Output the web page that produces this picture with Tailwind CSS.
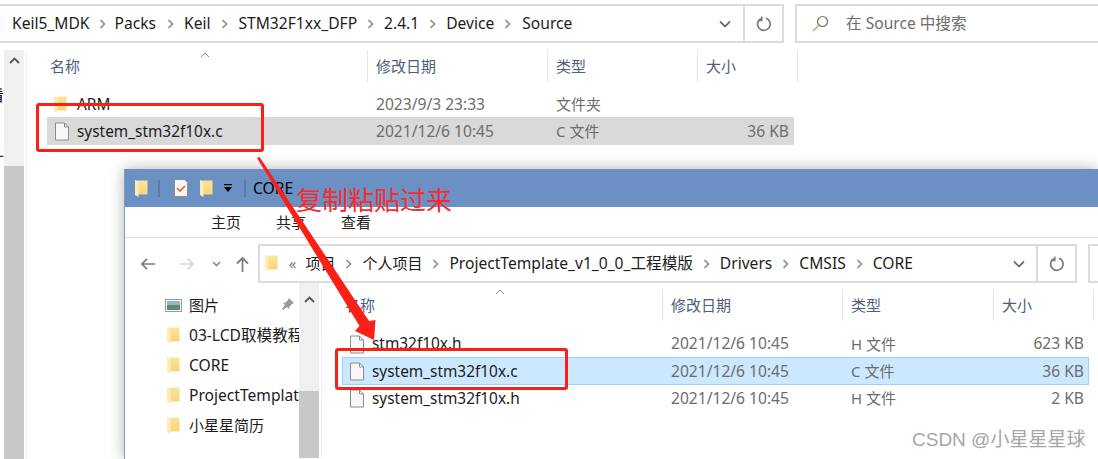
<!DOCTYPE html>
<html lang="zh-CN">
<head>
	<meta charset="UTF-8">
	<title>Source</title>
	<script src="https://cdn.jsdelivr.net/npm/@tailwindcss/browser@4"></script>
</head>
<body class="m-0 bg-white">
<svg class="absolute w-0 h-0">
	<defs>
		<linearGradient id="fold" x1="0" y1="0" x2="0" y2="1">
			<stop offset="0" stop-color="#fbe39a"/>
			<stop offset="1" stop-color="#f8d672"/>
		</linearGradient>
	</defs>
	<symbol id="folder" viewBox="0 0 13 17"><path d="M3 0.500h9.500v14H3z" fill="url(#fold)"/><path d="M0 0l3.500 1v16L0 15z" fill="#fdecb8"/></symbol>
	<symbol id="file" viewBox="0 0 16 19"><path d="M1.500 1h9l4 4v13h-13z" fill="#f8f8f8" stroke="#8c8c8c"/><path d="M10.500 1v4h4" fill="none" stroke="#8c8c8c"/></symbol>
	<symbol id="chev" viewBox="0 0 7 10"><path d="M1.500 1l4 4-4 4" fill="none" stroke="#8a8a8a" stroke-width="1.600"/></symbol>
	<symbol id="refresh" viewBox="0 0 16 16"><path d="M10 2.200a6.300 6.300 0 1 1-4.500.100" fill="none" stroke="#7d7d7d" stroke-width="1.800"/><path d="M5.800 0.500v4h-4" fill="none" stroke="#7d7d7d" stroke-width="1.500"/></symbol>
</svg>

<div class="relative w-[1098px] h-[459px] overflow-hidden bg-white text-[#1c1c1c] font-['Noto_Sans','Noto_Sans_CJK_SC',sans-serif] text-[15px] leading-none">

	<!-- back window: address bar -->
	<div class="pt-1 flex h-[43px]">
		<div class="w-[784px] h-[39px] border-y-2 border-r-2 border-[#dcdcdc] flex items-center text-[15.6px]">
			<div class="flex-1 flex items-center pl-3">
				<span>Keil5_MDK</span>
				<svg class="w-[7px] h-[10px] ml-[9px] mr-[9px]"><use href="#chev"/></svg>
				<span>Packs</span>
				<svg class="w-[7px] h-[10px] ml-[11px] mr-[10px]"><use href="#chev"/></svg>
				<span>Keil</span>
				<svg class="w-[7px] h-[10px] ml-[10px] mr-[11px]"><use href="#chev"/></svg>
				<span>STM32F1xx_DFP</span>
				<svg class="w-[7px] h-[10px] ml-[10px] mr-[10px]"><use href="#chev"/></svg>
				<span>2.4.1</span>
				<svg class="w-[7px] h-[10px] ml-[10px] mr-[10px]"><use href="#chev"/></svg>
				<span>Device</span>
				<svg class="w-[7px] h-[10px] ml-[10px] mr-[11px]"><use href="#chev"/></svg>
				<span>Source</span>
			</div>
			<svg class="w-[12px] h-[8px] mr-[12px]" viewBox="0 0 12 8" fill="none" stroke="#707070" stroke-width="1.800"><path d="M1 1.500l5 5 5-5"/></svg>
			<div class="w-[39px] h-full border-l-2 border-[#dcdcdc] flex items-center justify-center">
				<svg class="w-[16px] h-[16px]"><use href="#refresh"/></svg>
			</div>
		</div>
		<div class="ml-[11px] flex-1 h-[39px] border-y-2 border-l-2 border-[#dcdcdc] flex items-center text-[#6d6d6d] text-[15.6px]">
			<svg class="w-[17px] h-[17px] ml-[15px] mr-[17px]" viewBox="0 0 17 17" fill="none" stroke-width="1.200"><circle cx="10.500" cy="6.500" r="5" stroke="#707070"/><path d="M7 10L1 16" stroke="#c99a60"/></svg>
			<span>在 Source 中搜索</span>
		</div>
	</div>

	<!-- back window: body -->
	<div class="flex h-[416px] pt-[7px]">
		<div class="w-1 relative overflow-hidden text-black">
			<span class="absolute right-0 top-[38px]">看</span>
			<span class="absolute right-0 top-[100px] text-[#7a1a00]">计</span>
		</div>
		<div class="w-[20px] bg-[#f0f0f0] flex flex-col">
			<div class="h-[116px] flex justify-center pt-[7px]">
				<svg class="w-[11px] h-[7px]" viewBox="0 0 11 7" fill="none" stroke="#555" stroke-width="1.800"><path d="M1 6l4.500-4.500L10 6"/></svg>
			</div>
			<div class="flex-1 bg-[#c8c8c8]"></div>
		</div>
		<div class="w-[2px]"></div>
		<div class="border-l border-[#f0f0f0] pl-[20px] w-[768px]">
			<div class="relative grid grid-cols-[321px_180px_150px_100px] w-[751px] h-8 items-center text-[#4c607a]">
				<div class="h-full border-r border-[#e5e5e5] flex items-center pl-[3px]">名称</div>
				<div class="h-full border-r border-[#e5e5e5] flex items-center pl-2">修改日期</div>
				<div class="h-full border-r border-[#e5e5e5] flex items-center pl-2">类型</div>
				<div class="h-full border-r border-[#e5e5e5] flex items-center pl-2">大小</div>
				<svg class="absolute left-[153px] top-[2px] w-[10px] h-[6px]" viewBox="0 0 10 6" fill="none" stroke="#888" stroke-width="1"><path d="M1 5l4-4 4 4"/></svg>
			</div>
			<div class="mt-2 w-[747px]">
				<div class="grid grid-cols-[321px_180px_150px_96px] h-[27px] pt-[2px] items-center text-[#6d6d6d]">
					<div class="flex items-center pl-[7px] text-[#1c1c1c] text-[15.4px]">
						<svg class="w-[13px] h-[17px] mr-[10px]"><use href="#folder"/></svg>
						<span class="ml-0">ARM</span>
					</div>
					<div class="pl-2 text-[15.6px]">2023/9/3 23:33</div>
					<div class="pl-2">文件夹</div>
					<div></div>
				</div>
				<div class="grid grid-cols-[321px_180px_150px_96px] h-[28px] pt-px items-center text-[#6d6d6d] bg-[#d9d9d9]">
					<div class="flex items-center pl-[7px] text-[#1c1c1c] text-[15.4px]">
						<svg class="w-[16px] h-[19px] mr-[7px]"><use href="#file"/></svg>
						<span>system_stm32f10x.c</span>
					</div>
					<div class="pl-2 text-[15.6px]">2021/12/6 10:45</div>
					<div class="pl-2">C 文件</div>
					<div class="text-right pr-[5px] text-[15.6px]">36 KB</div>
				</div>
			</div>
		</div>
	</div>

	<!-- front window -->
	<div class="absolute left-[124px] top-[169px] w-[974px] h-[290px] bg-white border-l border-[#7f9cc6] shadow-[0_0_14px_rgba(0,0,0,0.3)]">
		<div class="h-[38px] bg-[#6a90c4] flex items-center pl-[10px]">
			<svg class="w-[13px] h-[17px]"><use href="#folder"/></svg>
			<div class="w-[2px] h-[17px] ml-[10px] bg-[#a9bfdc] border-x border-[#5a7aa8]"></div>
			<svg class="w-[14px] h-[18px] ml-[14px]" viewBox="0 0 14 18"><path d="M0.500 0.500h10l3 3v14h-13z" fill="#f6f6f6" stroke="#8c8c8c"/><path d="M3 9l3 3 5-5" fill="none" stroke="#e8622a" stroke-width="1.600"/></svg>
			<svg class="w-[13px] h-[17px] ml-[12px]"><use href="#folder"/></svg>
			<svg class="w-[8px] h-[8px] ml-[11px]" viewBox="0 0 8 8"><rect y="0" width="8" height="1.200" fill="#000"/><path d="M0 3h8L4 8z" fill="#000"/></svg>
			<div class="w-[2px] h-[17px] ml-[12px] bg-[#a9bfdc] border-x border-[#5a7aa8]"></div>
			<span class="ml-[7px] pt-px text-black text-[15.6px]">CORE</span>
		</div>
		<div class="h-[31px] border-b border-[#dcdcdc] flex items-center pl-[86px] gap-[35px] text-[#222]">
			<span>主页</span><span>共享</span><span>查看</span>
		</div>
		<div class="h-[45px] pt-[6px] flex">
			<div class="w-[133px] h-[39px] flex items-center pl-[15px]">
				<svg class="w-[16px] h-[14px]" viewBox="0 0 17 14" fill="none" stroke="#7d7d7d" stroke-width="1.800"><path d="M16 7H2M7.500 1.500L2 7l5.500 5.500"/></svg>
				<svg class="w-[16px] h-[14px] ml-[23px]" viewBox="0 0 17 14" fill="none" stroke="#d8d8d8" stroke-width="1.800"><path d="M1 7h14M9.500 1.500L15 7l-5.500 5.500"/></svg>
				<svg class="w-[9px] h-[6px] ml-[17px]" viewBox="0 0 9 6" fill="none" stroke="#8a8a8a" stroke-width="1.600"><path d="M1 1l3.500 3.500L8 1"/></svg>
				<svg class="w-[13px] h-[16px] ml-[15px]" viewBox="0 0 13 16" fill="none" stroke="#7d7d7d" stroke-width="1.800"><path d="M6.500 16V2M1 7.500L6.500 2 12 7.500"/></svg>
			</div>
			<div class="w-[821px] h-[39px] border-2 border-[#dcdcdc] flex items-center">
				<div class="flex-1 flex items-center pl-[5px]">
					<svg class="w-[13px] h-[17px]"><use href="#folder"/></svg>
					<span class="ml-[11px] text-[#777]">«</span>
					<span class="ml-[9px]">项目</span>
					<svg class="w-[7px] h-[10px] ml-[10px] mr-[10px]"><use href="#chev"/></svg>
					<span>个人项目</span>
					<svg class="w-[7px] h-[10px] ml-[10px] mr-[10px]"><use href="#chev"/></svg>
					<span class="text-[15.6px]">ProjectTemplate_v1_0_0_工程模版</span>
					<svg class="w-[7px] h-[10px] ml-[10px] mr-[10px]"><use href="#chev"/></svg>
					<span class="text-[15.6px]">Drivers</span>
					<svg class="w-[7px] h-[10px] ml-[10px] mr-[10px]"><use href="#chev"/></svg>
					<span class="text-[15.6px]">CMSIS</span>
					<svg class="w-[7px] h-[10px] ml-[10px] mr-[10px]"><use href="#chev"/></svg>
					<span class="text-[15.6px]">CORE</span>
				</div>
				<svg class="w-[12px] h-[8px] mr-[11px]" viewBox="0 0 12 8" fill="none" stroke="#707070" stroke-width="1.800"><path d="M1 1.500l5 5 5-5"/></svg>
				<div class="w-[39px] h-full border-l-2 border-[#dcdcdc] flex items-center justify-center">
					<svg class="w-[16px] h-[16px]"><use href="#refresh"/></svg>
				</div>
			</div>
			<div class="ml-[11px] w-[10px] h-[39px] border-y-2 border-l-2 border-[#dcdcdc]"></div>
		</div>
		<div class="flex h-[175px] pt-[7px]">
			<div class="w-[174px] overflow-hidden whitespace-nowrap">
				<div class="h-[30px] flex items-center pl-[40px] relative">
					<svg class="w-[17px] h-[13px] mr-[7px]" viewBox="0 0 17 13"><rect x="0.500" y="0.500" width="16" height="12" fill="#fff" stroke="#9a9a9a"/><rect x="2" y="2" width="13" height="4" fill="#8fb8d8"/><rect x="2" y="6" width="13" height="5" fill="#5f8a70"/></svg>
					<span>图片</span>
					<svg class="absolute left-[156px] top-[8px] w-[13px] h-[13px]" viewBox="0 0 13 13" fill="#9a9a9a"><path d="M8 0l5 5-2 1-2.500 2.500-.5 2.500-2-2L2 12 1 11l3-4-2-2 2.500-.5L7 2z"/></svg>
				</div>
				<div class="h-[30px] flex items-center pl-[42px]">
					<svg class="w-[13px] h-[17px] mr-[9px] shrink-0"><use href="#folder"/></svg>
					<span class="text-[15.6px] pt-px">03-LCD取模教程</span>
				</div>
				<div class="h-[30px] flex items-center pl-[42px]">
					<svg class="w-[13px] h-[17px] mr-[9px] shrink-0"><use href="#folder"/></svg>
					<span class="text-[15.6px] pt-px">CORE</span>
				</div>
				<div class="h-[30px] flex items-center pl-[42px]">
					<svg class="w-[13px] h-[17px] mr-[9px] shrink-0"><use href="#folder"/></svg>
					<span class="text-[15.6px] pt-px">ProjectTemplate</span>
				</div>
				<div class="h-[30px] flex items-center pl-[42px]">
					<svg class="w-[13px] h-[17px] mr-[9px] shrink-0"><use href="#folder"/></svg>
					<span>小星星简历</span>
				</div>
			</div>
			<div class="w-[20px] -mt-[7px] bg-[#f0f0f0] flex flex-col">
				<div class="h-[108px] flex justify-center pt-[13px]">
					<svg class="w-[11px] h-[7px]" viewBox="0 0 11 7" fill="none" stroke="#555" stroke-width="1.800"><path d="M1 6l4.500-4.500L10 6"/></svg>
				</div>
				<div class="flex-1 bg-[#c8c8c8]"></div>
			</div>
			<div class="w-[2px]"></div>
			<div class="border-l border-[#f0f0f0] pl-[20px] -mt-[1px]">
				<div class="relative grid grid-cols-[321px_180px_151px_100px] h-8 items-center text-[#4c607a]">
					<div class="h-full border-r border-[#e5e5e5] flex items-center pl-[3px] pt-px">名称</div>
					<div class="h-full border-r border-[#e5e5e5] flex items-center pl-2 pt-px">修改日期</div>
					<div class="h-full border-r border-[#e5e5e5] flex items-center pl-2 pt-px">类型</div>
					<div class="h-full border-r border-[#e5e5e5] flex items-center pl-2 pt-px">大小</div>
					<svg class="absolute left-[153px] top-0 w-[10px] h-[6px]" viewBox="0 0 10 6" fill="none" stroke="#888" stroke-width="1"><path d="M1 5l4-4 4 4"/></svg>
				</div>
				<div class="mt-[9px] w-[747px]">
					<div class="grid grid-cols-[321px_180px_151px_95px] h-[27px] pt-px items-center text-[#6d6d6d]">
						<div class="flex items-center pl-[7px] text-[#1c1c1c] text-[15.4px]">
							<svg class="w-[16px] h-[19px] mr-[7px]"><use href="#file"/></svg>
							<span>stm32f10x.h</span>
						</div>
						<div class="pl-2 text-[15.6px]">2021/12/6 10:45</div>
						<div class="pl-2">H 文件</div>
						<div class="text-right pr-[5px] text-[15.6px]">623 KB</div>
					</div>
					<div class="grid grid-cols-[321px_180px_151px_95px] h-[28px] pt-px items-center text-[#6d6d6d] bg-[#cce8ff] border border-[#99d1ff]">
						<div class="flex items-center pl-[6px] text-[#1c1c1c] text-[15.4px]">
							<svg class="w-[16px] h-[19px] mr-[7px]"><use href="#file"/></svg>
							<span>system_stm32f10x.c</span>
						</div>
						<div class="pl-[7px] text-[15.6px]">2021/12/6 10:45</div>
						<div class="pl-[7px]">C 文件</div>
						<div class="text-right pr-[6px] text-[15.6px]">36 KB</div>
					</div>
					<div class="grid grid-cols-[321px_180px_151px_95px] h-[27px] items-center text-[#6d6d6d]">
						<div class="flex items-center pl-[7px] text-[#1c1c1c] text-[15.4px]">
							<svg class="w-[16px] h-[19px] mr-[7px]"><use href="#file"/></svg>
							<span>system_stm32f10x.h</span>
						</div>
						<div class="pl-2 text-[15.6px]">2021/12/6 10:45</div>
						<div class="pl-2">H 文件</div>
						<div class="text-right pr-[5px] text-[15.6px]">2 KB</div>
					</div>
				</div>
			</div>
		</div>
	</div>

	<!-- red annotations -->
	<div class="absolute left-[36px] top-[103px] w-[228px] h-[49px] border-[3px] border-[#fb2016] rounded-[3px]"></div>
	<div class="absolute left-[335px] top-[348px] w-[233px] h-[42px] border-[3px] border-[#fb2016] rounded-[3px]"></div>
	<svg class="absolute left-0 top-0 w-[1098px] h-[459px] pointer-events-none" viewBox="0 0 1098 459">
		<path d="M257 158L259.500 157L369 321L375.500 320L374 340L355 331L359.500 326Z" fill="#fb2016"/>
	</svg>
	<div class="absolute left-[296px] top-[186px] text-[26px] leading-[28px] text-[#fb2a2a]">复制粘贴过来</div>
	<div class="absolute left-[912px] top-[430px] text-[19px] leading-[20px] text-[#a6a6a6] font-['Liberation_Sans','Noto_Sans_CJK_SC',sans-serif]">CSDN @小星星星球</div>
</div>
</body>
</html>
